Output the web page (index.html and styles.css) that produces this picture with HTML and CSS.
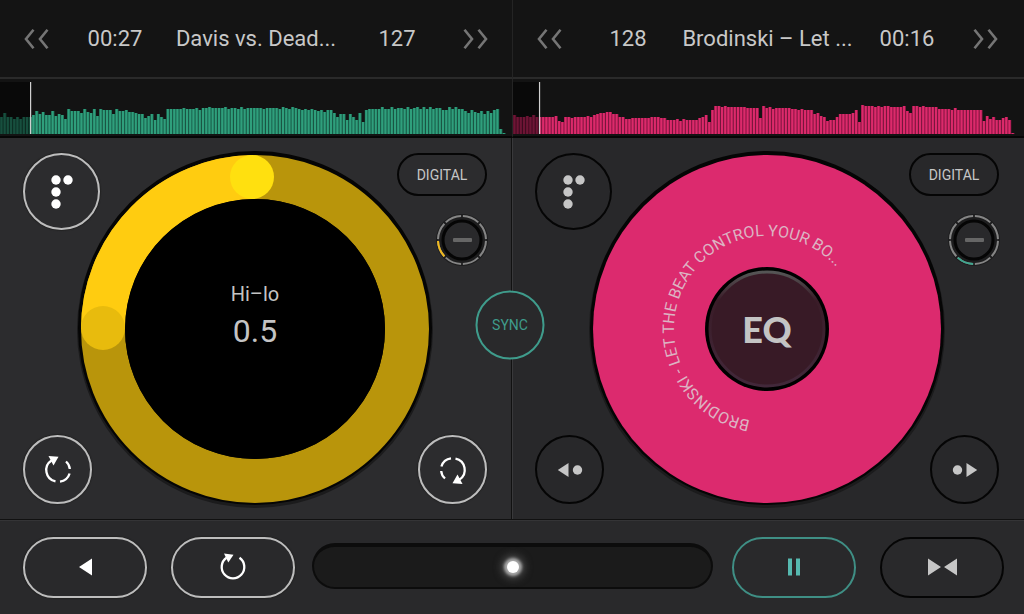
FILE: index.html
```html
<!DOCTYPE html>
<html lang="en">
<head>
<meta charset="utf-8">
<meta name="viewport" content="width=device-width, initial-scale=1">
<title>DJ decks</title>
<link rel="stylesheet" href="styles.css">
</head>
<body>
<svg class="defs" aria-hidden="true">
  <symbol id="chevrons" viewBox="0 0 26 20"><path d="M9.500 .8 2 10l7.500 9.200M23.500 .8 16 10l7.500 9.200" fill="none" stroke="currentColor" stroke-width="2.600"/></symbol>
  <symbol id="dots" viewBox="0 0 32 36"><g fill="currentColor"><circle cx="10" cy="6" r="4.700"/><circle cx="22" cy="6" r="4.700"/><circle cx="10" cy="18" r="4.700"/><circle cx="10" cy="30" r="4.700"/></g></symbol>
  <symbol id="loop" viewBox="0 0 32 32"><path d="M9.500 6.500A11.500 11.500 0 0 0 13.500 27.400M24 7.500Q27.500 10.500 27.800 15M27.600 19.500Q25.500 26.500 18 27.600" fill="none" stroke="currentColor" stroke-width="2.300"/><path d="M6.500 2 16.500 2.700 11.500 11.500Z" fill="currentColor"/></symbol>
  <symbol id="restart" viewBox="0 0 32 32"><path d="M22.500 6.800A11.300 11.300 0 1 1 9.500 6.800" fill="none" stroke="currentColor" stroke-width="2.300"/><path d="M7 2.500 16.500 3.700 11.300 11.500Z" fill="currentColor"/></symbol>
  <symbol id="nudge" viewBox="0 0 26 16"><path d="M.8 8 11.500 1V15Z" fill="currentColor"/><circle cx="20.500" cy="8" r="4.700" fill="currentColor"/></symbol>
</svg>

<main class="decks">
  <section class="deck deck-a" aria-label="Deck A">
    <header class="track">
      <button class="skip" aria-label="Previous track"><svg class="chevrons"><use href="#chevrons"/></svg></button>
      <span>00:27</span>
      <h2 class="title">Davis vs. Dead...</h2>
      <span>127</span>
      <button class="skip next" aria-label="Next track"><svg class="chevrons flip"><use href="#chevrons"/></svg></button>
    </header>
    <div class="wave"><svg class="bars" data-wave="a" viewBox="0 0 512 52" preserveAspectRatio="none"></svg></div>
    <div class="platter">
      <svg class="jog" viewBox="0 0 358 358">
        <circle class="rim" cx="179" cy="180" r="178"/>
        <circle class="rim-dark" cx="179" cy="178" r="177"/>
        <circle class="ring" cx="179" cy="179" r="152"/>
        <path class="ring-lit" d="M27 179A152 152 0 0 1 176 27"/>
        <circle cx="27" cy="178" r="22" fill="#e8bb0d"/>
        <circle cx="176" cy="27" r="22" fill="#ffe00f"/>
        <circle cx="179" cy="179" r="130"/>
        <text class="fx-name" x="179" y="151">Hi–lo</text>
        <text class="fx-value" x="179" y="192">0.5</text>
      </svg>
      <button class="round big lit top-left" aria-label="Effects"><svg class="icon-dots"><use href="#dots"/></svg></button>
      <div class="side">
        <button class="pill small">DIGITAL</button>
        <button class="knob" aria-label="Filter"><svg viewBox="0 0 56 56">
          <circle cx="28" cy="28" r="26" fill="#1d1d1e"/>
          <circle class="ticks" cx="28" cy="28" r="24" pathLength="80"/>
          <circle class="tick-on yellow" cx="28" cy="28" r="24" pathLength="80" transform="rotate(135 28 28)"/>
          <circle class="cap" cx="28" cy="28" r="19"/>
          <rect x="19" y="26" width="19" height="4" rx="1" fill="#666"/>
        </svg></button>
      </div>
      <button class="round lit bottom-left" aria-label="Loop in"><svg class="icon"><use href="#loop"/></svg></button>
      <button class="round lit bottom-right" aria-label="Loop out"><svg class="icon flip"><use href="#loop"/></svg></button>
    </div>
  </section>

  <section class="deck deck-b" aria-label="Deck B">
    <header class="track">
      <button class="skip" aria-label="Previous track"><svg class="chevrons"><use href="#chevrons"/></svg></button>
      <span>128</span>
      <h2 class="title">Brodinski – Let ...</h2>
      <span>00:16</span>
      <button class="skip next" aria-label="Next track"><svg class="chevrons flip"><use href="#chevrons"/></svg></button>
    </header>
    <div class="wave"><svg class="bars" data-wave="b" viewBox="0 0 512 52" preserveAspectRatio="none"></svg></div>
    <div class="platter">
      <svg class="jog" viewBox="0 0 358 358">
        <defs>
          <path id="label-arc" d="M179 272A93 93 0 1 1 272 179A93 93 0 0 1 179 272"/>
          <linearGradient id="eq-rim" x1="0" y1="0" x2="0" y2="1"><stop offset="0" stop-color="#555"/><stop offset=".25" stop-color="#3a1c28"/><stop offset="1" stop-color="#42283a"/></linearGradient>
        </defs>
        <circle class="rim" cx="179" cy="180" r="178"/>
        <circle class="rim-dark" cx="179" cy="178" r="177"/>
        <circle cx="179" cy="179" r="174" fill="#dc2a6e"/>
        <text class="label"><textPath href="#label-arc" startOffset="17">BRODINSKI - LET THE BEAT CONTROL YOUR BO...</textPath></text>
        <circle cx="179" cy="179" r="62"/>
        <circle cx="179" cy="179" r="57" fill="#381a26" stroke="url(#eq-rim)" stroke-width="3"/>
        <text class="eq" x="179" y="193">EQ</text>
      </svg>
      <button class="round big top-left" aria-label="Effects"><svg class="icon-dots"><use href="#dots"/></svg></button>
      <div class="side">
        <button class="pill small">DIGITAL</button>
        <button class="knob" aria-label="Filter"><svg viewBox="0 0 56 56">
          <circle cx="28" cy="28" r="26" fill="#1d1d1e"/>
          <circle class="ticks" cx="28" cy="28" r="24" pathLength="80"/>
          <circle class="tick-on teal" cx="28" cy="28" r="24" pathLength="80" transform="rotate(90 28 28)"/>
          <circle class="cap" cx="28" cy="28" r="19"/>
          <rect x="19" y="26" width="19" height="4" rx="1" fill="#666"/>
        </svg></button>
      </div>
      <button class="round bottom-left" aria-label="Nudge back"><svg class="icon-nudge"><use href="#nudge"/></svg></button>
      <button class="round bottom-right" aria-label="Nudge forward"><svg class="icon-nudge flip"><use href="#nudge"/></svg></button>
      <button class="round sync">SYNC</button>
    </div>
  </section>
</main>

<footer class="transport">
  <div class="pair">
    <button class="pill lit" aria-label="Play deck A"><svg width="13" height="18" viewBox="0 0 13 18"><path d="M0 9 13 .5v17Z" fill="currentColor"/></svg></button>
    <button class="pill lit" aria-label="Restart deck A"><svg class="icon"><use href="#restart"/></svg></button>
  </div>
  <input class="fader" type="range" min="0" max="100" value="50" aria-label="Crossfader">
  <div class="pair">
    <button class="pill teal-lit" aria-label="Pause deck B"><svg width="12" height="18" viewBox="0 0 12 18"><path d="M0 .5h4v17H0ZM8 .5h4v17H8Z" fill="currentColor"/></svg></button>
    <button class="pill" aria-label="Cue deck B"><svg width="29" height="18" viewBox="0 0 29 18"><path d="M0 .5 13 9 0 17.500ZM29 .5 16 9l13 8.500Z" fill="currentColor"/></svg></button>
  </div>
</footer>
<script src="waves.js"></script>
</body>
</html>
```
FILE: styles.css
```css
* { box-sizing: border-box; }

body {
  margin: 0;
  min-height: 100vh;
  display: flex;
  flex-direction: column;
  background: #29292b;
  color: #c8c8c8;
  font-family: Roboto, "Liberation Sans", sans-serif;
}

button {
  margin: 0;
  padding: 0;
  border: 0;
  background: none;
  color: inherit;
  font: inherit;
  cursor: pointer;
}

svg { display: block; }
.defs { position: absolute; width: 0; height: 0; }
.flip { transform: rotate(180deg); }

.decks {
  flex: 1;
  display: grid;
  grid-template-columns: 1fr 1fr;
}

.deck {
  display: flex;
  flex-direction: column;
  min-width: 0;
}

/* Track header */
.track {
  display: grid;
  grid-template-columns: 50px 82px 1fr 82px 50px;
  align-items: center;
  height: 79px;
  padding: 0 24px;
  background: #141414;
  border-bottom: 2px solid #2a2a2a;
  font-size: 22px;
  text-align: center;
}

.deck-b .track { padding-right: 26px; }

.deck-b .track,
.deck-b .wave { border-left: 1px solid #242424; }

.title {
  margin: 0;
  font-size: 22px;
  font-weight: 400;
  white-space: nowrap;
}

.skip { color: #757575; justify-self: start; }
.skip.next { justify-self: end; }
.chevrons { width: 26px; height: 20px; }

/* Waveform */
.wave {
  height: 59px;
  padding: 3px 0 4px;
  background: #131313;
  border-bottom: 2px solid #060606;
  box-shadow: 0 1px 0 #39393b;
}

.bars { width: 100%; height: 52px; }

/* Platter area */
.platter {
  position: relative;
  flex: 1;
  display: grid;
  grid-template-rows: 1fr;
  grid-template-columns: 1fr;
  padding: 15px 24px 15px 23px;
  background: #2c2c2e;
}

.deck-a .platter { border-right: 1px solid #111; }

.deck-b .platter {
  padding-right: 25px;
  padding-left: 22px;
  background: #28282a;
  border-left: 1px solid #39393b;
}

.platter > * { grid-area: 1 / 1; }

.jog {
  width: 358px;
  height: 358px;
  margin: -10px 0;
  place-self: center;
}

.rim { fill: #1b1b1c; }
.rim-dark { fill: #050505; }
.ring { fill: none; stroke: #b9950b; stroke-width: 44px; }
.ring-lit { fill: none; stroke: #ffcc10; stroke-width: 44px; }

.fx-name, .fx-value, .eq { text-anchor: middle; fill: #c4c4c4; }
.fx-name { font-size: 20px; }
.fx-value { font-size: 32px; }
.label { font-size: 16px; fill: #dcb4c3; }
.eq { font: 900 36px Lato, sans-serif; }

.top-left { place-self: start; }
.bottom-left { place-self: end start; }
.bottom-right { place-self: end; }

.side {
  place-self: start end;
  display: flex;
  flex-direction: column;
  align-items: flex-end;
  gap: 16px;
}

/* Buttons */
.round, .pill {
  display: flex;
  align-items: center;
  justify-content: center;
  border: 2px solid #050505;
  color: #c6c6c6;
}

.round {
  width: 69px;
  height: 69px;
  border-radius: 50%;
}

.round.big { width: 77px; height: 77px; }

.pill {
  width: 124px;
  height: 61px;
  border-radius: 31px;
}

.pill.small {
  width: 90px;
  height: 43px;
  font-size: 14px;
}

.round.lit, .pill.lit {
  border-color: #bdbdbd;
  color: #fff;
  box-shadow: 0 0 1px 1px #222;
}

.platter > .sync {
  grid-area: auto;
  position: absolute;
  left: -3px;
  top: 49%;
  transform: translate(-50%, -50%);
  border-color: #3f9c8c;
  color: #3f9c8c;
  background: #29292b;
  font-size: 14px;
}

.pill.teal-lit { border-color: #3f8f85; color: #56b9b0; }

.icon { width: 32px; height: 32px; }
.icon-dots { width: 32px; height: 36px; }
.icon-nudge { width: 26px; height: 16px; }

.knob { margin-right: -3px; }
.knob svg { width: 56px; height: 56px; }
.ticks, .tick-on { fill: none; stroke-width: 2px; }
.ticks { stroke: #858585; stroke-dasharray: 9 1; stroke-dashoffset: -0.5; }
.tick-on { stroke-dasharray: 9 71; stroke-dashoffset: -0.5; }
.yellow { stroke: #f1b91c; }
.teal { stroke: #3fa78f; }
.cap { fill: #29292b; stroke: #050505; stroke-width: 3px; }

/* Transport */
.transport {
  display: flex;
  align-items: center;
  gap: 17px;
  height: 95px;
  padding: 0 20px 0 23px;
  border-top: 1px solid #111;
  box-shadow: inset 0 1px 0 #343436;
}

.pair { display: flex; gap: 24px; }

.fader {
  flex: 1;
  min-width: 0;
  height: 46px;
  margin: 0 2px 2px 0;
  appearance: none;
  background: #1b1b1b;
  border: 2px solid #0c0c0c;
  border-top-width: 4px;
  border-radius: 23px;
}

.fader::-webkit-slider-thumb {
  appearance: none;
  width: 12px;
  height: 12px;
  border-radius: 50%;
  background: #fff;
  box-shadow: 0 0 3px 3px #aaa, 0 0 9px 5px #555;
}
```
FILE: waves.js
```js
const PITCH = 3.2;
const BASE = 52;

const waves = {
  a: {
    head: 30, dark: '#1d6b54', light: '#2f9f7c',
    bars: [17,21,17,17,15,17,15,17,17,17,19,23,20,22,19,19,23,18,20,19,15,25,23,23,23,21,25,22,21,25,
      18,25,24,24,24,20,25,23,23,24,22,22,21,20,20,16,18,20,14,20,17,15,25,25,25,25,25,26,25,25,
      25,26,24,26,26,27,26,26,26,26,27,25,26,26,25,27,25,26,26,26,26,26,25,26,26,26,26,25,27,26,
      25,27,26,25,24,25,24,25,24,23,24,22,24,24,21,17,20,20,14,20,17,14,21,12,24,25,25,25,25,27,
      25,25,27,25,26,26,25,27,25,26,27,25,27,25,27,25,26,26,24,24,27,25,27,25,25,23,21,24,22,21,
      23,20,23,21,24,25,5,1]
  },
  b: {
    head: 26, dark: '#97184a', light: '#dc2a6b',
    bars: [19,17,17,17,18,17,19,17,17,17,17,17,17,18,13,12,17,17,16,17,17,17,17,18,17,19,20,21,21,22,
      22,20,20,17,17,15,15,16,16,16,16,16,16,17,17,17,16,16,14,14,14,15,13,15,14,14,14,14,16,
      17,19,12,24,28,28,27,28,27,27,27,27,27,27,26,26,26,26,16,28,26,27,25,26,26,26,26,26,25,25,
      24,25,24,24,24,20,21,18,17,13,14,14,17,20,20,20,20,21,24,12,29,28,28,28,27,28,27,28,28,27,27,
      27,27,28,23,21,28,28,27,28,27,27,27,27,25,25,25,25,24,26,24,24,24,24,24,24,24,24,13,18,15,
      17,14,14,16,17,14,1]
  }
};

function rect(svg, x, y, width, height, fill) {
  const el = document.createElementNS('http://www.w3.org/2000/svg', 'rect');
  Object.entries({ x, y, width, height, fill }).forEach(([k, v]) => el.setAttribute(k, v));
  svg.appendChild(el);
  return el;
}

document.querySelectorAll('[data-wave]').forEach(svg => {
  const wave = waves[svg.dataset.wave];
  wave.bars.forEach((h, i) => {
    rect(svg, i * PITCH, BASE - h, PITCH, h, wave.dark);
    rect(svg, i * PITCH + 0.4, BASE - h, 2, h, wave.light);
  });
  rect(svg, 0, 0, wave.head, BASE, '#000').setAttribute('opacity', '0.5');
  rect(svg, wave.head, 0, 1.2, BASE, '#d0d0d0');
});
```
